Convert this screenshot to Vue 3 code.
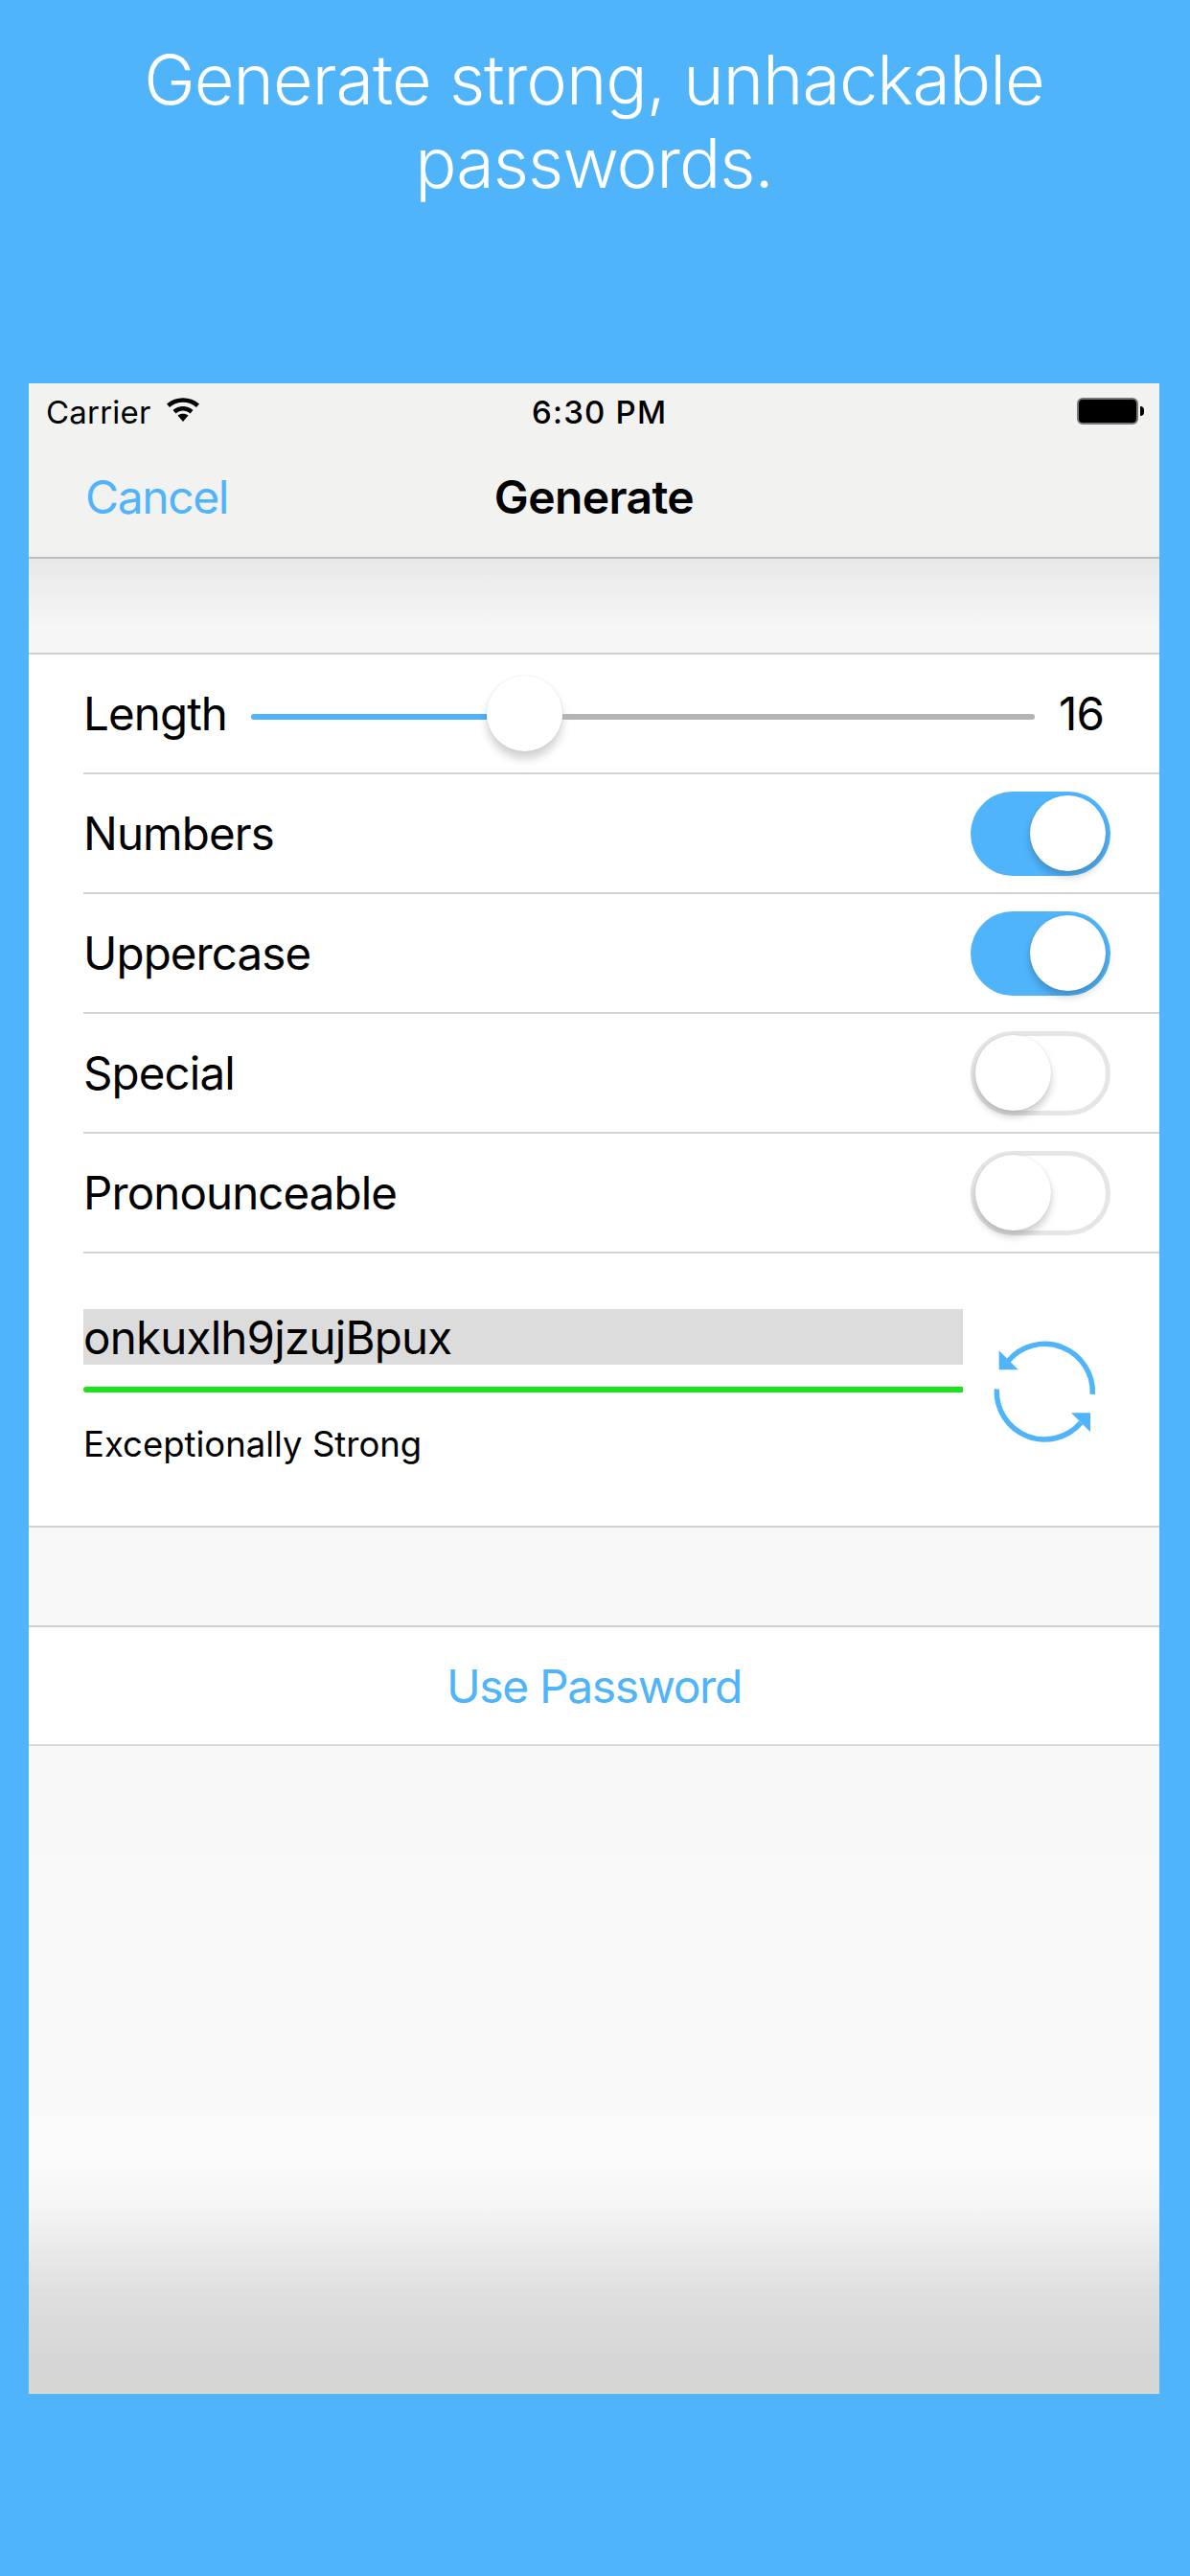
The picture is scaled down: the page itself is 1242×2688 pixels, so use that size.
<script setup>
const rows = [
  { label: 'Numbers', on: true },
  { label: 'Uppercase', on: true },
  { label: 'Special', on: false },
  { label: 'Pronounceable', on: false },
]
</script>

<template>
  <div class="page">
    <h1 class="headline">Generate strong, unhackable<br />passwords.</h1>
    <div class="device">
      <div class="nav">
        <div class="status">
          <div class="status-left">
            <span class="carrier">Carrier</span>
            <svg class="wifi" width="36" height="28" viewBox="0 0 36 28">
              <path d="M1 8.5C10.5 0 25.500 0 35 8.500L32 12C24 5 12 5 4 12Z" fill="#000" />
              <path d="M7.500 15C13.500 9.500 22.500 9.500 28.500 15L25.500 18.500C21 14.500 15 14.500 10.500 18.500Z" fill="#000" />
              <path d="M12.500 20.500C15.500 18 20.500 18 23.500 20.500L18 27Z" fill="#000" />
            </svg>
          </div>
          <span class="time">6:30 PM</span>
          <div class="battery"><div class="battery-fill"></div><div class="battery-nub"></div></div>
        </div>
        <div class="bar">
          <span class="cancel">Cancel</span>
          <span class="title">Generate</span>
        </div>
      </div>

      <div class="gap-top"></div>

      <div class="form">
        <div class="row">
          <span class="label label-length">Length</span>
          <div class="slider">
            <div class="seg seg-on"></div>
            <div class="slider-knob"></div>
            <div class="seg seg-off"></div>
          </div>
          <span class="value">16</span>
        </div>
        <div v-for="r in rows" :key="r.label" class="row">
          <span class="label">{{ r.label }}</span>
          <div class="toggle" :class="r.on ? 'toggle-on' : 'toggle-off'"><div class="knob"></div></div>
        </div>
        <div class="password">
          <div class="pw-col">
            <div class="pw-box">onkuxlh9jzujBpux</div>
            <div class="pw-meter"></div>
            <div class="pw-strength">Exceptionally Strong</div>
          </div>
          <svg class="refresh" width="120" height="120" viewBox="0 0 120 120">
            <g fill="none" stroke="#50b4fb" stroke-width="5.500">
              <path d="M110.300 64.900A50 50 0 0 0 22.300 30" />
              <path d="M10.300 59.500A50 50 0 0 0 98.300 94.400" />
            </g>
            <path d="M12.700 19.300V39.300H32.700Z" fill="#50b4fb" />
            <path d="M108 84.300H88L108 104.300Z" fill="#50b4fb" />
          </svg>
        </div>
      </div>

      <div class="gap-mid"></div>

      <div class="use"><span>Use Password</span></div>

      <div class="rest"></div>
    </div>
  </div>
</template>

<style>
html, body { margin: 0; padding: 0; }
</style>

<style scoped>
.page {
  width: 1242px;
  height: 2688px;
  background: #50b4fb;
  padding: 0 32px 0 30px;
  box-sizing: border-box;
  font-family: Inter, "Liberation Sans", sans-serif;
  color: #000;
  overflow: hidden;
}
.headline {
  margin: 0;
  height: 400px;
  padding-top: 39px;
  box-sizing: border-box;
  text-align: center;
  color: #fff;
  font-weight: 300;
  font-size: 72px;
  line-height: 87px;
  letter-spacing: -1px;
}
.device {
  width: 1180px;
  height: 2098px;
  background: #fff;
  display: flex;
  flex-direction: column;
}
.nav {
  height: 183px;
  box-sizing: border-box;
  background: #f2f2f1;
  border-bottom: 2px solid #bcbcbc;
}
.status {
  height: 60px;
  display: flex;
  align-items: center;
  justify-content: space-between;
  padding: 0 16px 0 18px;
  position: relative;
  font-size: 33px;
}
.status-left { display: flex; align-items: center; gap: 15px; }
.carrier { letter-spacing: 0.2px; }
.wifi { margin-top: -6px; }
.time {
  position: absolute;
  left: 525px;
  font-weight: 500;
  letter-spacing: 1.2px;
}
.battery {
  display: flex;
  align-items: center;
  width: 70px;
  margin-top: -2px;
}
.battery-fill {
  width: 64px;
  height: 28px;
  box-sizing: border-box;
  background: #000;
  border-radius: 6px;
  border: 2px solid #777;
}
.battery-nub {
  width: 4px;
  height: 10px;
  margin-left: 2px;
  background: #000;
  border-radius: 0 4px 4px 0;
}
.bar {
  height: 120px;
  position: relative;
  display: flex;
  align-items: center;
  justify-content: center;
  padding-bottom: 3px;
  box-sizing: border-box;
  font-size: 48px;
}
.cancel {
  position: absolute;
  left: 59px;
  color: #50b4fb;
  letter-spacing: -1.400px;
}
.title { font-weight: 600; letter-spacing: -0.600px; }
.gap-top {
  height: 100px;
  box-sizing: border-box;
  background: linear-gradient(#e8e8e8, #f6f6f6 75%);
  border-bottom: 2px solid #cfcfcf;
}
.form { padding-left: 57px; }
.row {
  height: 125px;
  box-sizing: border-box;
  border-bottom: 2px solid #d2d2d4;
  display: flex;
  align-items: center;
  justify-content: space-between;
  padding-right: 51px;
  font-size: 47.500px;
}
.label { letter-spacing: -0.900px; }
.label-length { flex: none; width: 175px; }
.slider {
  display: flex;
  align-items: center;
  flex: none;
  width: 818px;
}
.seg {
  height: 6px;
  margin-top: 6px;
}
.seg-on { width: 246px; background: #50b4fb; border-radius: 3px 0 0 3px; }
.seg-off { flex: 1; background: #b4b4b4; border-radius: 0 3px 3px 0; }
.slider-knob {
  width: 79px;
  height: 79px;
  border-radius: 50%;
  background: #fff;
  box-shadow: 0 8px 10px rgba(0, 0, 0, 0.18), 0 0 2px rgba(0, 0, 0, 0.12);
}
.value { flex: 1; text-align: right; padding-right: 7px; letter-spacing: -0.900px; }
.toggle {
  width: 146px;
  height: 88px;
  box-sizing: border-box;
  border-radius: 44px;
  display: flex;
  align-items: center;
}
.toggle-on {
  background: #50b4fb;
  justify-content: flex-end;
  padding: 0 5px;
}
.toggle-off {
  border: 5px solid #e5e5e5;
  background: #fff;
}
.knob {
  width: 79px;
  height: 79px;
  border-radius: 50%;
  background: #fff;
  box-shadow: 0 6px 8px rgba(0, 0, 0, 0.2), 0 0 2px rgba(0, 0, 0, 0.1);
}
.password {
  height: 286px;
  box-sizing: border-box;
  display: flex;
  border-bottom: 2px solid #d2d2d2;
  margin-left: -57px;
  padding: 58px 0 0 57px;
}
.pw-col { width: 918px; }
.pw-box {
  height: 58px;
  background: #dcdcdc;
  font-size: 47.500px;
  line-height: 60px;
  letter-spacing: -0.800px;
  white-space: nowrap;
}
.pw-meter {
  height: 6px;
  margin-top: 23px;
  background: #1ae41a;
  border-radius: 3px 0 0 3px;
}
.pw-strength {
  margin-top: 32px;
  font-size: 36.500px;
  line-height: 44px;
}
.refresh {
  margin: 24px 0 0 25px;
}
.gap-mid {
  height: 104px;
  box-sizing: border-box;
  background: #f8f8f8;
  border-bottom: 2px solid #cfcfcf;
}
.use {
  height: 124px;
  box-sizing: border-box;
  background: #fff;
  border-bottom: 2px solid #d8d8d8;
  display: flex;
  align-items: center;
  justify-content: center;
  color: #50b4fb;
  font-size: 48px;
  letter-spacing: -1.400px;
}
.rest {
  flex: 1;
  background: linear-gradient(#f8f8f8 0, #fafafa 65%, #f5f5f5 71%, #e9e9e9 78%, #dedede 85.500%, #d6d6d6 95%, #d6d6d5 100%);
}
</style>
